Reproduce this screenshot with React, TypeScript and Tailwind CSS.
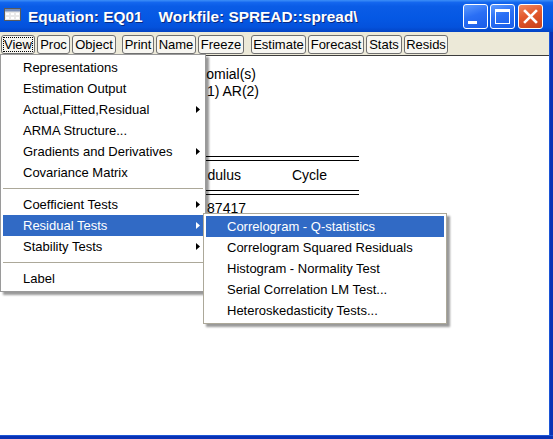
import React from "react";

function Tri({ white }: { white?: boolean }) {
  return (
    <svg width="4" height="7" viewBox="0 0 4 7" className="mr-[3px] shrink-0">
      <path d="M0 0 L4 3.5 L0 7 Z" fill={white ? "#ffffff" : "#000000"} />
    </svg>
  );
}

function MenuItem({ label, arrow, active, pl }: { label: string; arrow?: boolean; active?: boolean; pl?: boolean }) {
  return (
    <div
      className={`h-[21px] flex items-center ${pl ? "pl-[21px]" : "pl-[20px]"} ${
        active ? "bg-[#316ac5] text-white" : "text-black"
      }`}
    >
      <span className="flex-1 whitespace-nowrap">{label}</span>
      {arrow && <Tri white={active} />}
    </div>
  );
}

function Sep() {
  return (
    <div className="h-[11px] flex items-center">
      <div className="h-px w-full bg-[#aca899]" />
    </div>
  );
}

function TbButton({ label, w, focus }: { label: string; w: string; focus?: boolean }) {
  return (
    <div
      className={`${w} h-[19px] rounded-[3px] border border-[#707070] bg-[#f7f6f1] flex items-center justify-center p-[1px]`}
    >
      <div
        className={`w-full h-full flex items-center justify-center leading-none ${
          focus ? "border border-dotted border-black" : ""
        }`}
      >
        {label}
      </div>
    </div>
  );
}

export default function App() {
  return (
    <div className="w-[553px] h-[439px] overflow-hidden relative flex flex-col bg-white font-['Liberation_Sans',Arial,sans-serif]">
      {/* Title bar */}
      <div className="h-[32px] shrink-0 flex items-center bg-[linear-gradient(180deg,#3d8ff7_0%,#1366ee_8%,#0a5ce6_20%,#0558e4_55%,#0452dc_85%,#0343c4_100%)]">
        <div className="ml-[4px] mt-[-3px] w-[17px] h-[13px]">
          <svg width="17" height="13" viewBox="0 0 17 13">
            <rect x="0.5" y="0.5" width="16" height="12" fill="#e8e8e8" stroke="#5a5a5a" />
            <rect x="1" y="1" width="15" height="2.5" fill="#7a8fb8" />
            <g fill="#ffffff">
              <rect x="2" y="5" width="3" height="2" />
              <rect x="7" y="5" width="3" height="2" />
              <rect x="12" y="5" width="3" height="2" />
              <rect x="2" y="9" width="3" height="2" />
              <rect x="7" y="9" width="3" height="2" />
              <rect x="12" y="9" width="3" height="2" />
            </g>
          </svg>
        </div>
        <div className="ml-[7px] mt-[1px] text-white font-bold text-[15.4px] whitespace-nowrap flex [text-shadow:1px_1px_0_#0a2a80]">
          <span>Equation: EQ01</span>
          <span className="ml-[16px]">Workfile: SPREAD::spread\</span>
        </div>
        <div className="flex-1" />
        <div className="flex gap-[2px] mr-[10px] mt-[0px]">
          {/* minimize */}
          <div className="w-[25px] h-[25px] rounded-[3px] border border-white bg-[linear-gradient(160deg,#5d9bff_0%,#2a6ff5_45%,#1a5de8_100%)] flex items-end pb-[4px] pl-[4px]">
            <div className="w-[9px] h-[3px] bg-white" />
          </div>
          {/* maximize */}
          <div className="w-[25px] h-[25px] rounded-[3px] border border-white bg-[linear-gradient(160deg,#5d9bff_0%,#2a6ff5_45%,#1a5de8_100%)] flex items-center justify-center">
            <div className="w-[15px] h-[15px] border border-white border-t-[3px]" />
          </div>
          {/* close */}
          <div className="ml-[1px] w-[25px] h-[25px] rounded-[3px] border border-white bg-[linear-gradient(160deg,#f08a62_0%,#e2582c_45%,#c8401a_100%)] flex items-center justify-center">
            <svg width="15" height="15" viewBox="0 0 15 15">
              <path d="M2 2 L13 13 M13 2 L2 13" stroke="#ffffff" strokeWidth="2.6" strokeLinecap="square" />
            </svg>
          </div>
        </div>
      </div>

      {/* Body */}
      <div className="flex-1 flex min-h-0">
        <div className="flex-1 flex flex-col min-w-0">
          {/* toolbar */}
          <div className="h-[23px] shrink-0 bg-[#ece9d8] flex items-center pl-[1px] text-[13px] text-black pt-[1px]">
            <div className="flex gap-[2px]">
              <TbButton label="View" w="w-[34px]" focus />
              <TbButton label="Proc" w="w-[33px]" />
              <TbButton label="Object" w="w-[44px]" />
            </div>
            <div className="flex gap-[2px] ml-[6px]">
              <TbButton label="Print" w="w-[32px]" />
              <TbButton label="Name" w="w-[40px]" />
              <TbButton label="Freeze" w="w-[46px]" />
            </div>
            <div className="flex gap-[2px] ml-[7px]">
              <TbButton label="Estimate" w="w-[55px]" />
              <TbButton label="Forecast" w="w-[56px]" />
              <TbButton label="Stats" w="w-[36px]" />
              <TbButton label="Resids" w="w-[44px]" />
            </div>
          </div>
          {/* content: only the part right of the open menu is visible */}
          <div className="flex-1 bg-white border-t border-[#3c3c3c] pt-[10px] pl-[200px] text-[14px] leading-[17px] text-black">
            <div className="w-[56px] flex justify-end whitespace-nowrap">omial(s)</div>
            <div className="w-[59px] flex justify-end whitespace-nowrap">1) AR(2)</div>
            <div className="w-[159px] mt-[56px] h-[5px] border-y border-black" />
            <div className="mt-[6px] flex whitespace-nowrap">
              <div className="w-[41px] flex justify-end">dulus</div>
              <div className="ml-[51px]">Cycle</div>
            </div>
            <div className="w-[159px] mt-[6px] h-[5px] border-y border-black" />
            <div className="mt-[5px] flex whitespace-nowrap">
              <div className="w-[46px] flex justify-end">87417</div>
            </div>
            <div className="w-[159px] mt-[4px] h-px bg-black" />
          </div>
        </div>
        {/* right frame */}
        <div className="w-[4px] shrink-0 bg-[#0a32b4] border-l border-[#1c55d6]" />
      </div>
      {/* bottom frame */}
      <div className="h-[4px] shrink-0 bg-[#0a32b4] border-t border-[#1c55d6]" />

      {/* View menu */}
      <div className="absolute left-0 top-[54px] w-[206px] bg-white border border-[#9a9a9a] p-[2px] text-[13px] shadow-[3px_3px_2px_rgba(0,0,0,0.4)]">
        <MenuItem label="Representations" />
        <MenuItem label="Estimation Output" />
        <MenuItem label="Actual,Fitted,Residual" arrow />
        <MenuItem label="ARMA Structure..." />
        <MenuItem label="Gradients and Derivatives" arrow />
        <MenuItem label="Covariance Matrix" />
        <Sep />
        <MenuItem label="Coefficient Tests" arrow />
        <MenuItem label="Residual Tests" arrow active />
        <MenuItem label="Stability Tests" arrow />
        <Sep />
        <MenuItem label="Label" />
      </div>

      {/* Residual Tests submenu */}
      <div className="absolute left-[203px] top-[213px] w-[244px] bg-white border border-[#aca899] p-[2px] text-[13px] shadow-[3px_3px_2px_rgba(0,0,0,0.4)]">
        <MenuItem label="Correlogram - Q-statistics" active pl />
        <MenuItem label="Correlogram Squared Residuals" pl />
        <MenuItem label="Histogram - Normality Test" pl />
        <MenuItem label="Serial Correlation LM Test..." pl />
        <MenuItem label="Heteroskedasticity Tests..." pl />
      </div>
    </div>
  );
}
